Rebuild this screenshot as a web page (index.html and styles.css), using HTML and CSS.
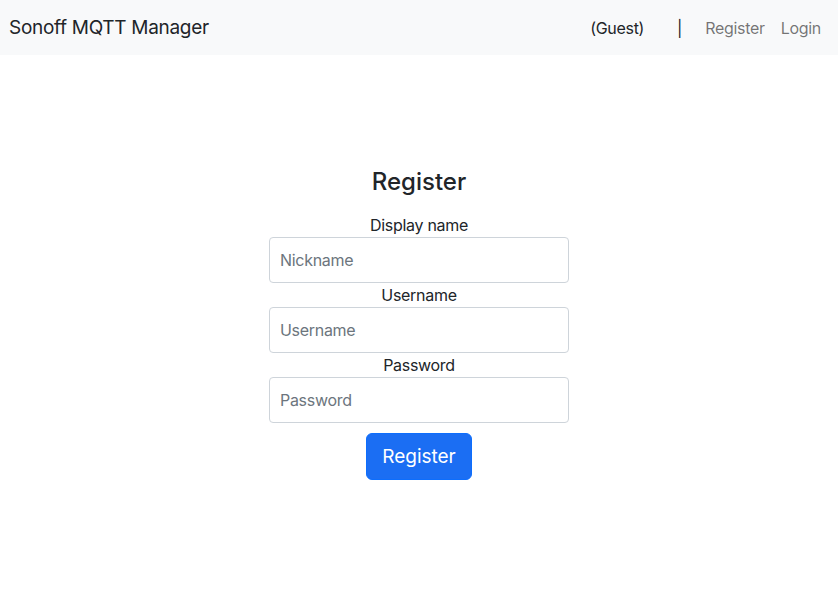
FILE: index.html
```html
<!DOCTYPE html>
<html lang="en">
<head>
<meta charset="utf-8">
<title>Sonoff MQTT Manager</title>
<link rel="stylesheet" href="styles.css">
</head>
<body>
<nav class="navbar">
  <a class="brand" href="#">Sonoff MQTT Manager</a>
  <div class="nav-right">
    <span class="guest">(Guest)</span>
    <span class="sep">|</span>
    <a class="nav-link" href="#">Register</a>
    <a class="nav-link" href="#">Login</a>
  </div>
</nav>
<main class="main">
  <form class="reg-form">
    <h4 class="title">Register</h4>
    <label class="label" for="nick">Display name</label>
    <input class="input" id="nick" type="text" placeholder="Nickname">
    <label class="label" for="user">Username</label>
    <input class="input" id="user" type="text" placeholder="Username">
    <label class="label" for="pass">Password</label>
    <input class="input" id="pass" type="password" placeholder="Password">
    <button class="btn" type="button">Register</button>
  </form>
</main>
</body>
</html>
```
FILE: styles.css
```css
* { box-sizing: border-box; }
html, body { margin: 0; padding: 0; }
body {
  font-family: Inter, "Liberation Sans", sans-serif;
  font-size: 16px;
  line-height: 1.5;
  color: #212529;
  background: #fff;
  letter-spacing: -0.3px;
}
.navbar {
  height: 55px;
  background: #f8f9fa;
  display: flex;
  align-items: center;
  justify-content: space-between;
  padding: 0 9px 0 9px;
}
.brand {
  font-size: 19px;
  color: #212529;
  text-decoration: none;
  line-height: 30px;
}
.nav-right {
  display: flex;
  align-items: center;
}
.guest { color: #212529; margin-right: 33px; }
.sep { color: #212529; margin-right: 15px; }
.nav-link {
  color: rgba(0,0,0,.55);
  text-decoration: none;
  padding: 8px;
}
.main {
  display: flex;
  justify-content: center;
  padding-top: 113px;
}
.reg-form {
  width: 300px;
  display: flex;
  flex-direction: column;
  align-items: center;
}
.title {
  font-size: 24px;
  font-weight: 500;
  line-height: 1.2;
  margin: 0 0 16px;
  letter-spacing: 0;
}
.label {
  display: block;
  text-align: center;
  line-height: 24px;
}
.input {
  width: 300px;
  height: 46px;
  border: 1px solid #ced4da;
  border-radius: 4px;
  padding: 0 10px;
  font-family: inherit;
  font-size: 16px;
  letter-spacing: -0.3px;
  color: #212529;
}
.input::placeholder { color: #6c757d; }
.btn {
  margin-top: 10px;
  background: #1b6ef3;
  border: 1px solid #0d6efd;
  color: #fff;
  font-family: inherit;
  font-size: 19px;
  letter-spacing: 0;
  padding: 1px 15px 0;
  height: 47px;
  border-radius: 6px;
}
```
